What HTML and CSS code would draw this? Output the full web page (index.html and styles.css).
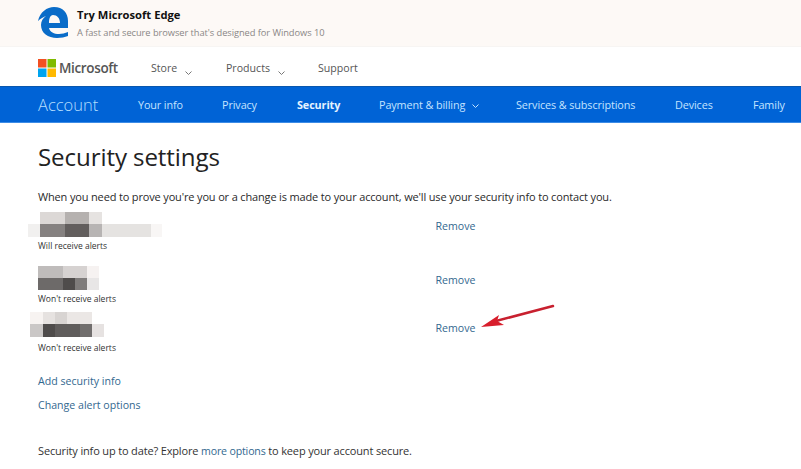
FILE: index.html
```html
<!DOCTYPE html>
<html lang="en">
<head>
<meta charset="utf-8">
<title>Security settings</title>
<link rel="stylesheet" href="styles.css">
</head>
<body>
<header class="promo">
  <svg class="edge" width="32" height="32" viewBox="0 0 32 32"><path fill="#0a6cc8" fill-rule="evenodd" d="M0 14C2 5 9 0 16 0c9 0 14 6 14 14v7H11c1 4 5 6 10 6 3 0 6-1 9-2v4c-3 1-7 2-11 2-9 0-16-5-16-13 0-4 2-7 5-9-3 1-6 3-8 5zM11 16h11c0-5-3-8-7-8-3 0-4 4-4 8z"/></svg>
  <div class="promo-text">
    <div class="promo-title">Try Microsoft Edge</div>
    <div class="promo-sub">A fast and secure browser that's designed for Windows 10</div>
  </div>
</header>
<nav class="topnav">
  <div class="brand">
    <svg width="18" height="18" viewBox="0 0 18 18"><rect width="8.500" height="8.500" fill="#f25022"/><rect x="9.500" width="8.500" height="8.500" fill="#7fba00"/><rect y="9.500" width="8.500" height="8.500" fill="#00a4ef"/><rect x="9.500" y="9.500" width="8.500" height="8.500" fill="#ffb900"/></svg>
    <span class="brand-name">Microsoft</span>
  </div>
  <a class="top-link store">Store<svg class="caret" width="7" height="4" viewBox="0 0 7 4"><path d="M.5.500 3.500 3.500 6.500.500" fill="none" stroke="#777" stroke-width="1"/></svg></a>
  <a class="top-link products">Products<svg class="caret" width="7" height="4" viewBox="0 0 7 4"><path d="M.5.500 3.500 3.500 6.500.500" fill="none" stroke="#777" stroke-width="1"/></svg></a>
  <a class="top-link">Support</a>
</nav>
<nav class="accountbar">
  <span class="account">Account</span>
  <a class="tab info">Your info</a>
  <a class="tab privacy">Privacy</a>
  <a class="tab security">Security</a>
  <a class="tab payment">Payment &amp; billing<svg class="tab-caret" width="7" height="4" viewBox="0 0 7 4"><path d="M.5.500 3.500 3.500 6.500.500" fill="none" stroke="#c5e4ff" stroke-width="1"/></svg></a>
  <a class="tab services">Services &amp; subscriptions</a>
  <a class="tab devices">Devices</a>
  <a class="tab">Family</a>
</nav>
<main class="content">
  <h1>Security settings</h1>
  <p class="lead">When you need to prove you're you or a change is made to your account, we'll use your security info to contact you.</p>
  <section class="info-row first">
    <div>
      <svg class="mosaic" width="140" height="25" viewBox="28 212 140 25" shape-rendering="crispEdges">
        <rect x="40" y="212" width="25" height="12" fill="#dcd8d6"/><rect x="65" y="212" width="24" height="12" fill="#b5b1af"/><rect x="89" y="212" width="13" height="12" fill="#e6e3e1"/>
        <rect x="28" y="224" width="12" height="13" fill="#f1f0ef"/><rect x="40" y="224" width="25" height="13" fill="#858180"/><rect x="65" y="224" width="24" height="13" fill="#625e5d"/><rect x="89" y="224" width="13" height="13" fill="#b7b4b3"/><rect x="102" y="224" width="49" height="13" fill="#e5e3e1"/><rect x="151" y="224" width="11" height="13" fill="#f8f6f5"/>
      </svg>
      <div class="alert">Will receive alerts</div>
    </div>
    <a class="link remove">Remove</a>
  </section>
  <section class="info-row second">
    <div>
      <svg class="mosaic" width="140" height="24" viewBox="28 266 140 24" shape-rendering="crispEdges">
        <rect x="38" y="266" width="25" height="12" fill="#bfbcbb"/><rect x="63" y="266" width="24" height="12" fill="#d6d2d1"/><rect x="87" y="266" width="12" height="12" fill="#f6f2f1"/>
        <rect x="38" y="278" width="25" height="12" fill="#6d6a69"/><rect x="63" y="278" width="12" height="12" fill="#4f4c4b"/><rect x="75" y="278" width="12" height="12" fill="#7f7c7b"/><rect x="87" y="278" width="12" height="12" fill="#e8e6e6"/>
      </svg>
      <div class="alert">Won't receive alerts</div>
    </div>
    <a class="link remove">Remove</a>
  </section>
  <section class="info-row third">
    <div>
      <svg class="mosaic" width="140" height="25" viewBox="28 312 140 25" shape-rendering="crispEdges">
        <rect x="30" y="312" width="13" height="12" fill="#f7f3f1"/><rect x="43" y="312" width="12" height="12" fill="#e6e2e0"/><rect x="55" y="312" width="12" height="12" fill="#d8d4d2"/><rect x="67" y="312" width="25" height="12" fill="#ebe7e5"/>
        <rect x="30" y="324" width="13" height="13" fill="#cac7c6"/><rect x="43" y="324" width="12" height="13" fill="#4f4c4b"/><rect x="55" y="324" width="25" height="13" fill="#605d5c"/><rect x="80" y="324" width="12" height="13" fill="#716e6d"/><rect x="92" y="324" width="12" height="13" fill="#e6e2e1"/>
      </svg>
      <div class="alert">Won't receive alerts</div>
    </div>
    <a class="link remove">Remove</a>
  </section>
  <svg class="arrow" width="76" height="26" viewBox="0 0 76 26"><path d="M73 2 16 17" stroke="#c8202f" stroke-width="2.500" fill="none" stroke-linecap="round"/><path d="M1 23 19 11 17 17 24 21z" fill="#d81e2c"/></svg>
  <p class="action add"><a class="link">Add security info</a></p>
  <p class="action"><a class="link">Change alert options</a></p>
  <p class="foot">Security info up to date? Explore <a class="link">more options</a> to keep your account secure.</p>
</main>
</body>
</html>
```
FILE: styles.css
```css
html, body { margin: 0; padding: 0; height: 469px; overflow: hidden; background: #fff; }
body { font-family: "Open Sans", "Noto Sans", "Liberation Sans", sans-serif; color: #222; }
a { text-decoration: none; }

.promo { height: 47px; box-sizing: border-box; background: #fdf9f6; display: flex; align-items: flex-start; padding: 7px 0 0 38px; border-bottom: 1px solid #f7f5f3; }
.edge { flex: none; }
.promo-text { margin-left: 7px; margin-top: -1px; }
.promo-title { font-size: 11.200px; font-weight: 700; line-height: 16px; color: #111; margin-top: 1px; }
.promo-sub { font-size: 9.300px; line-height: 14px; color: #8a8786; margin-top: 3px; letter-spacing: -.06px; }

.topnav { height: 39px; box-sizing: border-box; display: flex; align-items: center; padding: 2px 0 0 38px; background: #fff; }
.brand { display: flex; align-items: center; width: 113px; }
.brand-name { font-size: 13.500px; font-weight: 600; color: #555; margin-left: 3px; letter-spacing: -.35px; }
.top-link { font-size: 10.600px; color: #555; display: flex; align-items: center; }
.store { width: 75px; }
.products { width: 92px; }
.caret { margin: 10px 0 0 8px; }

.accountbar { height: 37px; box-sizing: border-box; background: #0063d6; border-top: 1px solid #0a57ad; border-bottom: 1px solid #3d8ce6; display: flex; align-items: center; padding-left: 38px; white-space: nowrap; overflow: hidden; }
.account { font-size: 16.500px; font-weight: 300; color: #b4deff; width: 100px; }
.tab { font-size: 10.800px; color: #c5e4ff; letter-spacing: -.1px; }
.info { width: 84px; }
.privacy { width: 75px; }
.security { width: 82px; font-weight: 700; color: #e6f3ff; }
.payment { width: 137px; }
.tab-caret { margin: 0 0 1px 7px; }
.services { width: 159px; }
.devices { width: 78px; }

.content { position: relative; padding-left: 38px; }
h1 { margin: 0; padding-top: 19px; font-size: 24.100px; font-weight: 400; line-height: 30px; color: #222; letter-spacing: -.1px; }
.lead { margin: 17px 0 0; font-size: 11px; line-height: 16px; color: #2a2a2a; letter-spacing: -.155px; }
.info-row { display: flex; justify-content: space-between; width: 437.500px; }
.first { margin-top: 7px; }
.second { margin-top: 14px; }
.third { margin-top: 7px; }
.mosaic { display: block; margin-left: -10px; }
.alert { font-size: 8.500px; line-height: 12px; margin-top: 3px; color: #333; }
.third .alert { margin-top: 5px; }
.link { color: #33688f; font-size: 10.600px; line-height: 16px; }
.remove { margin-top: 6px; }
.third .remove { margin-top: 8px; }
.arrow { position: absolute; left: 480px; top: 181px; }
.action { margin: 0; line-height: 16px; }
.add { margin-top: 17px; }
.action + .action { margin-top: 8px; }
.add + .action { margin-top: 6px; }
.foot { margin: 30px 0 0; font-size: 11px; line-height: 16px; color: #333; letter-spacing: -.155px; }
```
